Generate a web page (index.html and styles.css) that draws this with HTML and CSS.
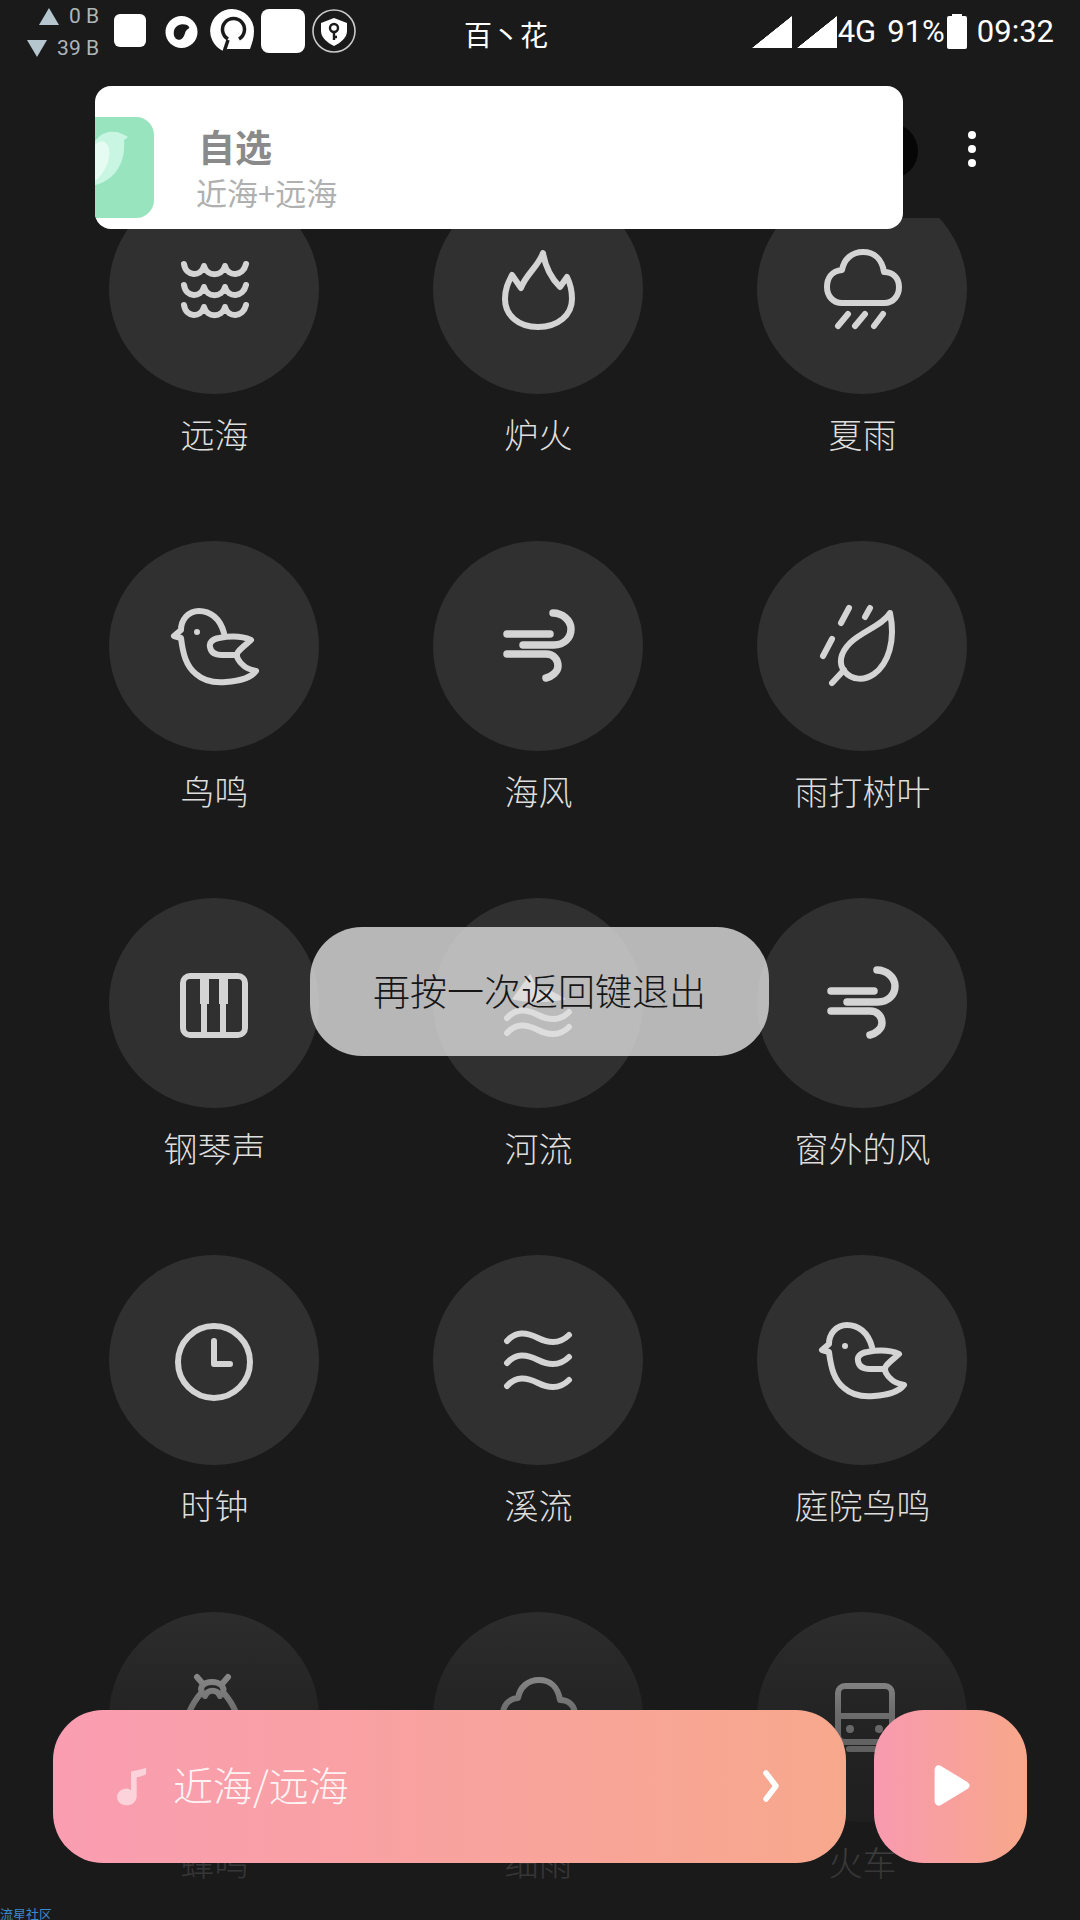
FILE: index.html
```html
<!DOCTYPE html>
<html lang="zh-CN">
<head>
<meta charset="utf-8">
<title>白噪音</title>
<link rel="stylesheet" href="styles.css">
</head>
<body>
<svg class="sprite" xmlns="http://www.w3.org/2000/svg">
  <defs>
    <symbol id="i-sea" viewBox="0 0 100 100">
      <g>
        <path d="M20 25C22 38 37 38 40 27C43 38 58 38 61 27C64 38 79 38 82 25"/>
        <path d="M20 46C22 59 37 59 40 48C43 59 58 59 61 48C64 59 79 59 82 46"/>
        <path d="M20 66C22 79 37 79 40 68C43 79 58 79 61 68C64 79 79 79 82 66"/>
      </g>
    </symbol>
    <symbol id="i-fire" viewBox="0 0 100 100">
      <path d="M55 14C57 26 62 38 72 48L79 38C83 46 84 52 84 60C84 76 70 88 50 88C30 88 17 76 17 60C17 50 20 44 24 36L33 49C38 35 50 28 55 14Z"/>
    </symbol>
    <symbol id="i-cloud" viewBox="0 0 100 100">
      <path d="M30 64H72C82 64 87 56 87 48C87 39 81 33 72 33C70 20 62 13 51 13C40 13 32 20 30 31C20 32 15 39 15 48C15 57 21 64 30 64Z"/>
    </symbol>
    <symbol id="i-rain" viewBox="0 0 100 100">
      <path d="M30 64H72C82 64 87 56 87 48C87 39 81 33 72 33C70 20 62 13 51 13C40 13 32 20 30 31C20 32 15 39 15 48C15 57 21 64 30 64Z"/>
      <path d="M36 75L26 87M53 75L43 87M71 75L62 87"/>
    </symbol>
    <symbol id="i-bird" viewBox="0 0 100 100">
      <path d="M60 37C56 22 46 15 35 15C24 15 17 24 17 34L10 40L17 42C19 58 22 70 32 78C40 85 52 87 62 86C74 85 86 83 92 75C88 74 83 73 80 70C75 66 71 60 74 56C78 51 83 48 87 44C78 40 66 40 55 42C48 43 45 47 46 51C47 57 52 59 58 59H72"/>
      <circle class="solid" cx="33" cy="36" r="3"/>
    </symbol>
    <symbol id="i-wind" viewBox="0 0 100 100">
      <path class="thick" d="M19 38H62M35 49H66C76 49 83 42 83 33C83 24 74 17 65 17M19 58H58C66 58 70 64 70 70C70 76 63 81 58 82"/>
    </symbol>
    <symbol id="i-leaf" viewBox="0 0 100 100">
      <path d="M78 17C70 30 50 35 38 47C28 57 26 68 33 76C40 84 52 85 62 78C76 68 84 45 78 17Z"/>
      <path d="M32 74L20 87M37 12L29 27M58 12L53 21M20 43L11 60"/>
    </symbol>
    <symbol id="i-piano" viewBox="0 0 100 100">
      <rect x="19" y="23" width="62" height="59" rx="7"/>
      <rect class="solid" x="36" y="23" width="9" height="28"/>
      <rect class="solid" x="55" y="23" width="9" height="28"/>
      <path d="M40 50V82M59 50V82"/>
    </symbol>
    <symbol id="i-stream" viewBox="0 0 100 100">
      <path d="M19 31C28 21 38 22 50 28C62 34 72 34 81 25"/>
      <path d="M19 53C28 43 38 44 50 50C62 56 72 56 81 47"/>
      <path d="M19 76C28 66 38 67 50 73C62 79 72 79 81 70"/>
    </symbol>
    <symbol id="i-river" viewBox="0 0 100 100">
      <path class="solid" d="M42 21L24 46C34 50 66 50 78 46L60 36L53 41Z"/>
      <path d="M19 65C28 55 38 56 50 62C62 68 72 68 81 59"/>
      <path d="M19 80C28 70 38 71 50 77C62 83 72 83 81 74"/>
    </symbol>
    <symbol id="i-clock" viewBox="0 0 100 100">
      <circle cx="50" cy="52" r="36"/>
      <path d="M50 31V54H66"/>
    </symbol>
    <symbol id="i-bug" viewBox="0 0 100 100">
      <path d="M20 72C20 50 30 34 38 25C35 20 40 15 48 15C56 15 61 20 59 25C67 34 77 50 77 72"/>
      <path d="M41 29C44 22 53 22 56 29M33 10L39 17M64 10L58 17"/>
    </symbol>
    <symbol id="i-train" viewBox="0 0 100 100">
      <rect x="26" y="19" width="54" height="56" rx="7"/>
      <path d="M26 49H80M37 82H67"/>
      <circle class="solid" cx="38" cy="62" r="4"/>
      <circle class="solid" cx="67" cy="62" r="4"/>
    </symbol>
  </defs>
</svg>

<div class="app">
  <main class="grid">
    <div class="sound"><div class="disc"><svg class="glyph"><use href="#i-sea"/></svg></div><div class="label">远海</div></div>
    <div class="sound"><div class="disc"><svg class="glyph"><use href="#i-fire"/></svg></div><div class="label">炉火</div></div>
    <div class="sound"><div class="disc"><svg class="glyph"><use href="#i-rain"/></svg></div><div class="label">夏雨</div></div>
    <div class="sound"><div class="disc"><svg class="glyph"><use href="#i-bird"/></svg></div><div class="label">鸟鸣</div></div>
    <div class="sound"><div class="disc"><svg class="glyph"><use href="#i-wind"/></svg></div><div class="label">海风</div></div>
    <div class="sound"><div class="disc"><svg class="glyph"><use href="#i-leaf"/></svg></div><div class="label">雨打树叶</div></div>
    <div class="sound"><div class="disc"><svg class="glyph"><use href="#i-piano"/></svg></div><div class="label">钢琴声</div></div>
    <div class="sound"><div class="disc"><svg class="glyph"><use href="#i-river"/></svg></div><div class="label">河流</div></div>
    <div class="sound"><div class="disc"><svg class="glyph"><use href="#i-wind"/></svg></div><div class="label">窗外的风</div></div>
    <div class="sound"><div class="disc"><svg class="glyph"><use href="#i-clock"/></svg></div><div class="label">时钟</div></div>
    <div class="sound"><div class="disc"><svg class="glyph"><use href="#i-stream"/></svg></div><div class="label">溪流</div></div>
    <div class="sound"><div class="disc"><svg class="glyph"><use href="#i-bird"/></svg></div><div class="label">庭院鸟鸣</div></div>
    <div class="sound"><div class="disc"><svg class="glyph"><use href="#i-bug"/></svg></div><div class="label">蜂鸣</div></div>
    <div class="sound"><div class="disc"><svg class="glyph"><use href="#i-cloud"/></svg></div><div class="label">细雨</div></div>
    <div class="sound"><div class="disc"><svg class="glyph"><use href="#i-train"/></svg></div><div class="label">火车</div></div>
  </main>

  <div class="fade"></div>

  <header class="header">
    <div class="statusbar">
      <div class="status-left">
        <div class="net">
          <div class="net-row"><span class="tri tri-up"></span><span class="net-val">0 B</span></div>
          <div class="net-row"><span class="tri tri-down"></span><span class="net-val">39 B</span></div>
        </div>
        <span class="sq-small"></span>
        <svg class="st-ring" viewBox="0 0 34 34"><circle cx="17" cy="17" r="16.5" fill="#fff"/><path d="M9 18C9 13 13 9 18 9C22 9 24 10 25 12C25 14 22 14 21 17C20 21 18 25 15 25C11 25 9 22 9 18Z" fill="#1a1a1a"/></svg>
        <svg class="st-q" viewBox="0 0 44 44"><path d="M22 0A22 22 0 0 1 44 22C44 29 42 34 40 40H17L13 42A22 22 0 0 1 22 0Z" fill="#fff"/><path d="M18 30A11 11 0 1 1 29 30" fill="none" stroke="#1a1a1a" stroke-width="3.5"/><path d="M18 31L14 43" stroke="#1a1a1a" stroke-width="3.5"/></svg>
        <span class="sq-big"></span>
        <svg class="st-shield" viewBox="0 0 44 44"><circle cx="22" cy="22" r="21" fill="none" stroke="#c8c8c8" stroke-width="1.6"/><path d="M22 9L35 14V22C35 29 28 34 22 37C16 34 9 29 9 22V14Z" fill="#fff"/><circle cx="22" cy="19" r="4" fill="none" stroke="#1a1a1a" stroke-width="2.4"/><path d="M22 23V31M22 28H25" stroke="#1a1a1a" stroke-width="2.4"/></svg>
        <span class="status-title">百丶花</span>
      </div>
      <div class="status-right">
        <span class="signal"></span>
        <span class="signal"></span>
        <span class="st-text st-4g">4G</span>
        <span class="st-text st-pct">91%</span>
        <span class="battery"></span>
        <span class="st-text st-time">09:32</span>
      </div>
    </div>
    <div class="toolbar">
      <span class="blackdot"></span>
      <div class="more"><i></i><i></i><i></i></div>
    </div>
  </header>

  <section class="card">
    <div class="tile">
      <svg class="tile-bird" viewBox="0 0 34 56"><path d="M0 10C6 2 14 0 20 1C24 1 28 3 33 6L29 9C30 20 28 36 16 46C11 50 5 53 0 54Z" fill="#c9f6e2"/><path d="M0 14C6 8 12 10 14 18C16 28 10 42 0 50Z" fill="#e6fcf2"/></svg>
    </div>
    <div class="card-text">
      <div class="card-title">自选</div>
      <div class="card-sub">近海+远海</div>
    </div>
  </section>

  <div class="toast">再按一次返回键退出</div>

  <footer class="player">
    <div class="now">
      <svg class="note" viewBox="0 0 32 40"><path d="M15 4C20 3 26 2 31 0V7C27 9 24 10 21 10V30C21 36 16 40 10 40C4 40 0 36 0 31C0 26 5 22 10 22C12 22 14 23 15 24Z" fill="#fff"/></svg>
      <span class="now-text">近海/远海</span>
      <svg class="chev" viewBox="0 0 18 34"><path d="M4 4L14 17L4 30" fill="none" stroke="#fff" stroke-width="5.500" stroke-linecap="round" stroke-linejoin="round"/></svg>
    </div>
    <div class="play">
      <svg class="play-ico" viewBox="0 0 36 42"><path d="M1 6C1 1.500 5 0 8 2.500L33 17.500C36 20 36 22 33 24.500L8 39.500C5 42 1 40.500 1 36Z" fill="#fff"/></svg>
    </div>
  </footer>

  <div class="watermark">流星社区</div>
</div>
</body>
</html>
```
FILE: styles.css
```css
* { box-sizing: border-box; }
html, body { margin: 0; padding: 0; background: #1a1a1a; }
body { width: 1080px; height: 1920px; overflow: hidden; font-family: "Noto Sans CJK SC", "Noto Sans", sans-serif; }
.sprite { display: none; }

.app { position: relative; width: 1080px; height: 1920px; overflow: hidden; background: #1a1a1a; }

/* sound grid */
.grid {
  display: grid;
  grid-template-columns: repeat(3, 210px);
  column-gap: 114px;
  row-gap: 84px;
  padding: 184px 0 0 109px;
}
.sound { display: flex; flex-direction: column; align-items: center; }
.disc {
  width: 210px; height: 210px; border-radius: 50%;
  background: #303030;
  display: flex; align-items: center; justify-content: center;
}
.glyph {
  width: 100px; height: 100px;
  fill: none; stroke: #d4d4d4; stroke-width: 6; stroke-linecap: round; stroke-linejoin: round;
}
.thick { stroke-width: 7.5; }
.solid { fill: #d4d4d4; stroke: none; }
.label {
  margin-top: 17px; padding-left: 1px;
  font-size: 34px; line-height: 46px; font-weight: 300;
  color: #dedede; white-space: nowrap;
}

.fade {
  position: absolute; left: 0; right: 0; top: 1570px; height: 350px;
  background: linear-gradient(to bottom, rgba(26,26,26,0) 0%, rgba(26,26,26,.55) 40%, rgba(26,26,26,.85) 85%, rgba(26,26,26,.9) 100%);
}

/* header */
.header {
  position: absolute; left: 0; top: 0; width: 1080px; height: 218px;
  background: #1a1a1a;
  display: flex; flex-direction: column;
}
.statusbar { height: 64px; display: flex; justify-content: space-between; padding-right: 26px; }
.status-left { display: flex; align-items: flex-start; padding-left: 27px; }
.status-right { display: flex; align-items: flex-start; }

.net { width: 72px; }
.net-row { display: flex; justify-content: space-between; align-items: center; height: 32px; }
.net-row:first-child { padding-left: 12px; }
.tri { width: 0; height: 0; border-left: 10px solid transparent; border-right: 10px solid transparent; }
.tri-up { border-bottom: 17px solid #b6c6cf; }
.tri-down { border-top: 17px solid #b6c6cf; }
.net-val { font-family: Roboto, sans-serif; font-size: 21px; line-height: 32px; color: #adb6ba; }

.sq-small { width: 32px; height: 33px; margin: 14px 0 0 15px; background: #fff; border-radius: 6px; }
.st-ring { width: 33px; height: 34px; margin: 15px 0 0 19px; }
.st-q { width: 44px; height: 44px; margin: 9px 0 0 12px; }
.sq-big { width: 44px; height: 44px; margin: 9px 0 0 7px; background: #fff; border-radius: 8px; }
.st-shield { width: 44px; height: 44px; margin: 9px 0 0 7px; }
.status-title { margin: 12px 0 0 108px; font-size: 28px; line-height: 44px; color: #fff; }

.signal {
  width: 40px; height: 32px; margin: 16px 5px 0 0;
  background: linear-gradient(to bottom right, transparent 49.500%, #fff 50.500%);
}
.st-text { font-family: Roboto, sans-serif; font-size: 31px; line-height: 36px; color: #fff; margin-top: 14px; }
.st-4g { margin-left: -4px; }
.st-pct { margin-left: 11px; }
.battery {
  position: relative; width: 20px; height: 33px; margin: 16px 0 0 2px;
  background: #fff; border-radius: 2px;
}
.battery::before {
  content: ""; position: absolute; left: 5px; top: -2px; width: 10px; height: 2px; background: #fff;
}
.st-time { margin-left: 10px; }

.toolbar { flex: 1; display: flex; justify-content: flex-end; padding: 59px 104px 0 0; }
.blackdot { width: 56px; height: 56px; margin: 0 50px 0 0; border-radius: 50%; background: #060606; }
.more { display: flex; flex-direction: column; gap: 6px; padding-top: 8px; }
.more i { display: block; width: 8px; height: 8px; border-radius: 50%; background: #fff; }

/* notification card */
.card {
  position: absolute; left: 95px; top: 86px; width: 808px; height: 143px;
  background: #fff; border-radius: 16px; overflow: hidden;
  display: flex; align-items: flex-start;
}
.tile {
  width: 59px; height: 101px; margin-top: 31px;
  background: #97e4bf; border-radius: 0 18px 18px 0;
  overflow: hidden;
}
.tile-bird { display: block; width: 34px; height: 56px; margin-top: 14px; }
.card-text { margin-left: 42px; padding-top: 33px; display: flex; flex-direction: column; }
.card-title { font-size: 37px; line-height: 54px; font-weight: 700; color: #8a8a8a; margin-left: 2px; }
.card-sub { font-size: 31px; line-height: 38px; color: #b0b0b0; }

/* toast */
.toast {
  position: absolute; left: 310px; top: 927px; width: 459px; height: 129px;
  border-radius: 52px; padding-bottom: 3px;
  background: rgba(222, 222, 222, .8);
  display: flex; align-items: center; justify-content: center;
  font-size: 37px; font-weight: 300; color: #161616; white-space: nowrap;
}

/* player */
.player {
  position: absolute; left: 53px; top: 1710px; width: 974px; height: 153px;
  display: flex; justify-content: space-between;
}
.now {
  width: 793px; border-radius: 50px;
  background: linear-gradient(to right, #fa9db2, #f7a88c);
  display: flex; align-items: center; padding: 0 66px 0 64px;
}
.note { width: 30px; height: 39px; opacity: .55; }
.now-text { margin-left: 26px; margin-top: -5px; flex: 1; font-size: 40px; font-weight: 300; color: rgba(255,255,255,.9); }
.chev { width: 18px; height: 34px; margin-top: -2px; }
.play {
  width: 153px; border-radius: 50px;
  background: linear-gradient(to right, #f89ab0, #f8a78a);
  display: flex; align-items: center; justify-content: center;
}
.play-ico { width: 38px; height: 43px; margin-left: 2px; margin-top: -2px; }

.watermark {
  position: absolute; left: 0; bottom: -3px;
  font-size: 13px; line-height: 18px; color: #3a8ad0; white-space: nowrap;
}
```
